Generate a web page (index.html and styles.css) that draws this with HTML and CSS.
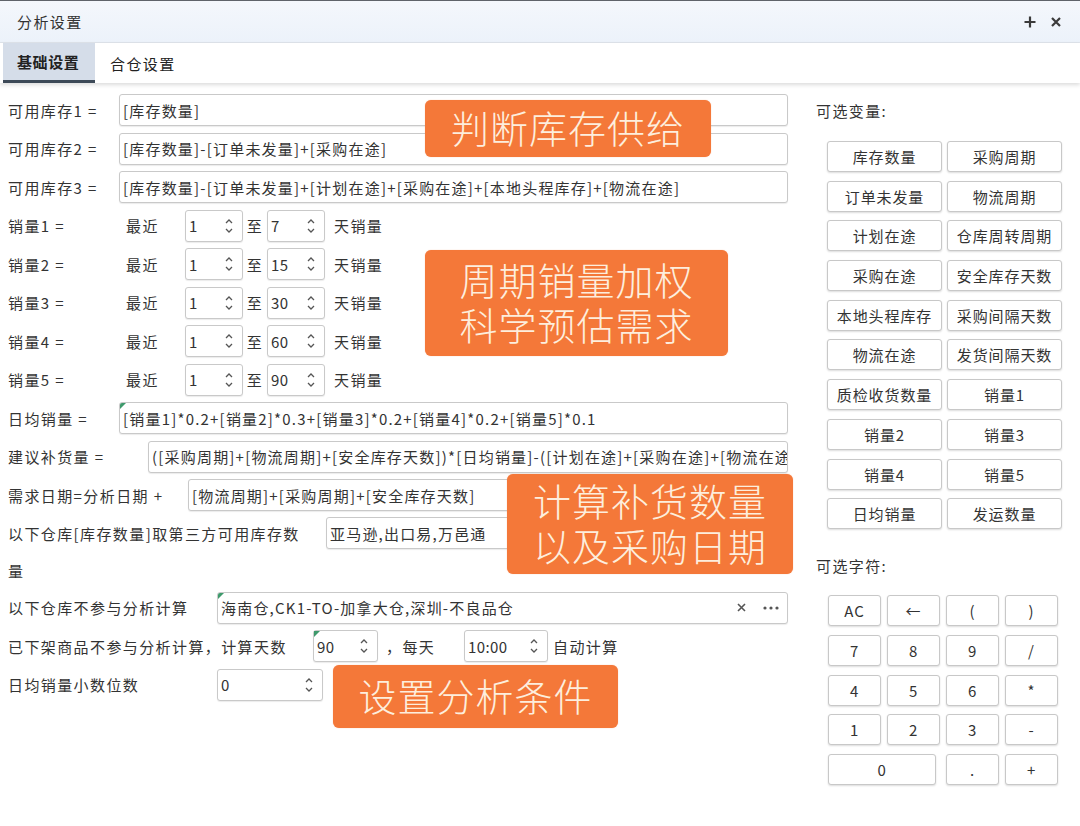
FILE: index.html
```html
<!DOCTYPE html>
<html lang="zh-CN">
<head>
<meta charset="utf-8">
<title>分析设置</title>
<link rel="stylesheet" href="styles.css">
</head>
<body>
<div class="titlebar">
  <span class="title">分析设置</span>
  <svg class="tb-icon" width="12" height="12" viewBox="0 0 12 12"><path d="M6 0.5V11.5M0.5 6H11.5" stroke="#3a3a3a" stroke-width="2.2"/></svg>
  <svg class="tb-icon close" width="10" height="10" viewBox="0 0 10 10"><path d="M1 1L9 9M9 1L1 9" stroke="#3a3a3a" stroke-width="2.2"/></svg>
</div>
<div class="tabs">
  <div class="tab active">基础设置</div>
  <div class="tab">合仓设置</div>
</div>
<div class="main">
  <div class="left">
    <div class="row"><span class="lbl">可用库存1 =</span><div class="field">[库存数量]</div></div>
    <div class="row"><span class="lbl">可用库存2 =</span><div class="field">[库存数量]-[订单未发量]+[采购在途]</div></div>
    <div class="row"><span class="lbl">可用库存3 =</span><div class="field">[库存数量]-[订单未发量]+[计划在途]+[采购在途]+[本地头程库存]+[物流在途]</div></div>

    <div class="row"><span class="lbl lbl-sales">销量1 =</span><span class="recent">最近</span><div class="spin s58"><span class="val">1</span><svg class="arr" width="10" height="18" viewBox="0 0 10 18"><path d="M2 6L5 3L8 6M2 12L5 15L8 12" fill="none" stroke="#555" stroke-width="1.3"/></svg></div><span class="to">至</span><div class="spin s58"><span class="val">7</span><svg class="arr" width="10" height="18" viewBox="0 0 10 18"><path d="M2 6L5 3L8 6M2 12L5 15L8 12" fill="none" stroke="#555" stroke-width="1.3"/></svg></div><span class="days">天销量</span></div>
    <div class="row"><span class="lbl lbl-sales">销量2 =</span><span class="recent">最近</span><div class="spin s58"><span class="val">1</span><svg class="arr" width="10" height="18" viewBox="0 0 10 18"><path d="M2 6L5 3L8 6M2 12L5 15L8 12" fill="none" stroke="#555" stroke-width="1.3"/></svg></div><span class="to">至</span><div class="spin s58"><span class="val">15</span><svg class="arr" width="10" height="18" viewBox="0 0 10 18"><path d="M2 6L5 3L8 6M2 12L5 15L8 12" fill="none" stroke="#555" stroke-width="1.3"/></svg></div><span class="days">天销量</span></div>
    <div class="row"><span class="lbl lbl-sales">销量3 =</span><span class="recent">最近</span><div class="spin s58"><span class="val">1</span><svg class="arr" width="10" height="18" viewBox="0 0 10 18"><path d="M2 6L5 3L8 6M2 12L5 15L8 12" fill="none" stroke="#555" stroke-width="1.3"/></svg></div><span class="to">至</span><div class="spin s58"><span class="val">30</span><svg class="arr" width="10" height="18" viewBox="0 0 10 18"><path d="M2 6L5 3L8 6M2 12L5 15L8 12" fill="none" stroke="#555" stroke-width="1.3"/></svg></div><span class="days">天销量</span></div>
    <div class="row"><span class="lbl lbl-sales">销量4 =</span><span class="recent">最近</span><div class="spin s58"><span class="val">1</span><svg class="arr" width="10" height="18" viewBox="0 0 10 18"><path d="M2 6L5 3L8 6M2 12L5 15L8 12" fill="none" stroke="#555" stroke-width="1.3"/></svg></div><span class="to">至</span><div class="spin s58"><span class="val">60</span><svg class="arr" width="10" height="18" viewBox="0 0 10 18"><path d="M2 6L5 3L8 6M2 12L5 15L8 12" fill="none" stroke="#555" stroke-width="1.3"/></svg></div><span class="days">天销量</span></div>
    <div class="row"><span class="lbl lbl-sales">销量5 =</span><span class="recent">最近</span><div class="spin s58"><span class="val">1</span><svg class="arr" width="10" height="18" viewBox="0 0 10 18"><path d="M2 6L5 3L8 6M2 12L5 15L8 12" fill="none" stroke="#555" stroke-width="1.3"/></svg></div><span class="to">至</span><div class="spin s58"><span class="val">90</span><svg class="arr" width="10" height="18" viewBox="0 0 10 18"><path d="M2 6L5 3L8 6M2 12L5 15L8 12" fill="none" stroke="#555" stroke-width="1.3"/></svg></div><span class="days">天销量</span></div>

    <div class="row"><span class="lbl">日均销量 =</span><div class="field marked">[销量1]*0.2+[销量2]*0.3+[销量3]*0.2+[销量4]*0.2+[销量5]*0.1</div></div>
    <div class="row"><span class="lbl lbl-wide">建议补货量 =</span><div class="field">([采购周期]+[物流周期]+[安全库存天数])*[日均销量]-([计划在途]+[采购在途]+[物流在途])</div></div>
    <div class="row"><span class="lbl lbl-date">需求日期=分析日期 +</span><div class="field">[物流周期]+[采购周期]+[安全库存天数]</div></div>
    <div class="row row-wrap"><span class="lbl lbl-wrap">以下仓库[库存数量]取第三方可用库存数量</span><div class="field">亚马逊,出口易,万邑通</div></div>
    <div class="row"><span class="lbl lbl-ex">以下仓库不参与分析计算</span><div class="field marked"><span class="fill">海南仓,CK1-TO-加拿大仓,深圳-不良品仓</span><svg class="clr" width="9" height="9" viewBox="0 0 9 9"><path d="M1 1L8 8M8 1L1 8" stroke="#555" stroke-width="1.6"/></svg><svg class="more" width="16" height="4" viewBox="0 0 16 4"><circle cx="2" cy="2" r="1.6" fill="#555"/><circle cx="8" cy="2" r="1.6" fill="#555"/><circle cx="14" cy="2" r="1.6" fill="#555"/></svg></div></div>
    <div class="row"><span class="lbl lbl-off">已下架商品不参与分析计算，计算天数</span><div class="spin s65 marked"><span class="val">90</span><svg class="arr" width="10" height="18" viewBox="0 0 10 18"><path d="M2 6L5 3L8 6M2 12L5 15L8 12" fill="none" stroke="#555" stroke-width="1.3"/></svg></div><span class="daily">，每天</span><div class="spin s84"><span class="val">10:00</span><svg class="arr" width="10" height="18" viewBox="0 0 10 18"><path d="M2 6L5 3L8 6M2 12L5 15L8 12" fill="none" stroke="#555" stroke-width="1.3"/></svg></div><span class="auto">自动计算</span></div>
    <div class="row"><span class="lbl lbl-ex">日均销量小数位数</span><div class="spin s106"><span class="val">0</span><svg class="arr" width="10" height="18" viewBox="0 0 10 18"><path d="M2 6L5 3L8 6M2 12L5 15L8 12" fill="none" stroke="#555" stroke-width="1.3"/></svg></div></div>

    <div class="callout c1"><span class="cl">判断库存供给</span></div>
    <div class="callout c2"><span class="cl">周期销量加权</span><span class="cl">科学预估需求</span></div>
    <div class="callout c3"><span class="cl">计算补货数量</span><span class="cl">以及采购日期</span></div>
    <div class="callout c4"><span class="cl">设置分析条件</span></div>
  </div>

  <div class="right">
    <div class="heading">可选变量:</div>
    <div class="vars">
      <div class="btn">库存数量</div><div class="btn">采购周期</div>
      <div class="btn">订单未发量</div><div class="btn">物流周期</div>
      <div class="btn">计划在途</div><div class="btn">仓库周转周期</div>
      <div class="btn">采购在途</div><div class="btn">安全库存天数</div>
      <div class="btn">本地头程库存</div><div class="btn">采购间隔天数</div>
      <div class="btn">物流在途</div><div class="btn">发货间隔天数</div>
      <div class="btn">质检收货数量</div><div class="btn">销量1</div>
      <div class="btn">销量2</div><div class="btn">销量3</div>
      <div class="btn">销量4</div><div class="btn">销量5</div>
      <div class="btn">日均销量</div><div class="btn">发运数量</div>
    </div>
    <div class="heading heading2">可选字符:</div>
    <div class="calc">
      <div class="btn">AC</div><div class="btn">←</div><div class="btn">(</div><div class="btn">)</div>
      <div class="btn">7</div><div class="btn">8</div><div class="btn">9</div><div class="btn">/</div>
      <div class="btn">4</div><div class="btn">5</div><div class="btn">6</div><div class="btn">*</div>
      <div class="btn">1</div><div class="btn">2</div><div class="btn">3</div><div class="btn">-</div>
      <div class="btn zero">0</div><div class="btn">.</div><div class="btn">+</div>
    </div>
  </div>
</div>
</body>
</html>
```
FILE: styles.css
```css
* { box-sizing: border-box; }

body {
  margin: 0;
  width: 1080px;
  height: 826px;
  overflow: hidden;
  background: #fff;
  color: #333;
  font-family: "Noto Sans CJK SC", "Noto Sans", sans-serif;
  font-size: 15px;
  letter-spacing: 1.4px;
}

.titlebar {
  height: 43px;
  border-top: 1px solid #5f636a;
  border-bottom: 1px solid #dfe4eb;
  background: linear-gradient(#f4f7fc, #ecf2fa);
  display: flex;
  align-items: center;
  padding: 0 19px 0 17px;
}
.title { flex: 1; color: #333; }
.tb-icon { display: block; }
.tb-icon.close { margin-left: 15px; }

.tabs {
  position: relative;
  z-index: 1;
  height: 40px;
  display: flex;
  padding-left: 3px;
  background: #fff;
  box-shadow: 0 2px 4px rgba(0, 0, 0, 0.14);
}
.tab {
  display: flex;
  align-items: center;
  padding: 0 15px;
  color: #222;
  white-space: nowrap;
}
.tab.active {
  width: 92px;
  padding: 0 0 0 14px;
  background: #d5dde9;
  border-bottom: 3px solid #3d4a58;
  font-weight: bold;
  letter-spacing: 0.6px;
}

.main { display: flex; height: 743px; }

.left {
  position: relative;
  width: 800px;
  padding: 8px 12px 0 8px;
}

.row {
  display: flex;
  align-items: center;
  height: 38.5px;
  white-space: nowrap;
}
.lbl { flex: none; width: 111px; }
.lbl-sales { width: 118px; }
.lbl-wide { width: 140px; }
.lbl-date { width: 180px; }
.lbl-ex { width: 209px; }
.lbl-off { width: 305px; }

.row-wrap {
  height: 74px;
  align-items: flex-start;
}
.lbl-wrap {
  width: 296px;
  margin-right: 22px;
  white-space: normal;
  line-height: 37px;
}
.row-wrap .field { margin-top: 2.5px; }

.field {
  position: relative;
  flex: 1;
  min-width: 0;
  height: 32px;
  display: flex;
  align-items: center;
  padding: 0 8px 0 3px;
  border: 1px solid #c9c9c9;
  border-radius: 3px;
  box-shadow: 0 1px 1px rgba(0, 0, 0, 0.08);
  background: #fff;
  overflow: hidden;
  white-space: nowrap;
  letter-spacing: 1.2px;
}
.fill { flex: 1; }
.clr { margin-right: 17px; flex: none; }
.more { flex: none; }

.marked::before {
  content: "";
  position: absolute;
  left: 0;
  top: 0;
  border-top: 6px solid #3e9a6c;
  border-right: 6px solid transparent;
}

.recent { width: 59px; flex: none; }
.to { width: 24px; text-align: center; flex: none; }
.days { margin-left: 9px; }
.daily { width: 86px; padding-left: 8px; flex: none; }
.auto { margin-left: 5px; }

.spin {
  position: relative;
  flex: none;
  height: 32px;
  display: flex;
  align-items: center;
  justify-content: space-between;
  padding: 0 8px 0 3px;
  border: 1px solid #c9c9c9;
  border-radius: 3px;
  box-shadow: 0 1px 1px rgba(0, 0, 0, 0.08);
  background: #fff;
  letter-spacing: 0.4px;
}
.s58 { width: 58px; }
.s65 { width: 65px; }
.s84 { width: 84px; }
.s106 { width: 106px; }
.arr { display: block; }

.callout {
  position: absolute;
  background: #f47839;
  color: #fdeedd;
  border-radius: 6px;
  font-size: 38px;
  font-weight: 300;
  letter-spacing: 1px;
  text-align: center;
  display: flex;
  flex-direction: column;
  align-items: center;
  justify-content: center;
  padding-bottom: 5px;
  box-shadow: 0 0 1px rgba(240, 120, 60, 0.6);
}
.cl { display: block; line-height: 45px; height: 45px; }
.c1 { left: 425px; top: 17px; width: 286px; height: 57px; }
.c2 { left: 425px; top: 167px; width: 303px; height: 106px; }
.c3 { left: 507px; top: 391px; width: 286px; height: 100px; }
.c4 { left: 333px; top: 582px; width: 285px; height: 63px; }

.right {
  width: 280px;
  padding: 16px 0 0 16px;
}
.heading {
  height: 24px;
  line-height: 24px;
}
.heading2 { margin-top: 25px; }

.vars {
  margin: 18px 0 0 11px;
  display: grid;
  grid-template-columns: 115px 115px;
  grid-auto-rows: 31px;
  column-gap: 5px;
  row-gap: 8.7px;
}
.calc {
  margin: 17px 0 0 12px;
  display: grid;
  grid-template-columns: repeat(4, 53px);
  grid-auto-rows: 31px;
  column-gap: 6px;
  row-gap: 8.7px;
}
.zero { grid-column: span 2; margin-right: 4px; }

.btn {
  display: flex;
  align-items: center;
  justify-content: center;
  border: 1px solid #c8c8c8;
  border-radius: 3px;
  background: #fff;
  box-shadow: 0 1px 2px rgba(0, 0, 0, 0.14);
  color: #333;
  white-space: nowrap;
  letter-spacing: 0.9px;
}
```
